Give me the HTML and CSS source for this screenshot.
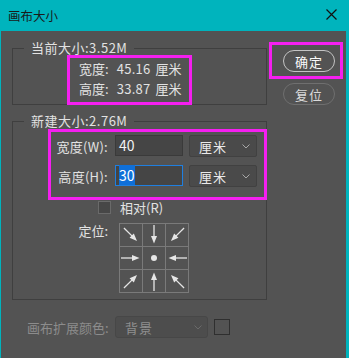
FILE: index.html
```html
<!DOCTYPE html>
<html lang="zh-CN">
<head>
  <meta charset="UTF-8">
  <title>画布大小</title>
  <link rel="stylesheet" href="styles.css">
</head>
<body>

  <div class="window">
    <div class="titlebar">
      <span class="title">画布大小</span>
      <svg class="close" width="11" height="11" viewBox="0 0 11 11">
        <path d="M0.5 0.5 L10.5 10.5 M10.5 0.5 L0.5 10.5" stroke="#111" stroke-width="1.2" fill="none"/>
      </svg>
    </div>

    <div class="main">
      <div class="left">
        <fieldset class="group group-current">
          <legend>当前大小:3.52M</legend>
          <div class="mark mark-current">
            <div class="size-line"><span class="lbl">宽度:</span><span class="val">45.16</span><span class="unit">厘米</span></div>
            <div class="size-line"><span class="lbl">高度:</span><span class="val">33.87</span><span class="unit">厘米</span></div>
          </div>
        </fieldset>

        <fieldset class="group group-new">
          <legend>新建大小:2.76M</legend>
          <div class="mark mark-new">
            <div class="field-row">
              <span class="field-lbl">宽度(W):</span>
              <div class="num-input">40</div>
              <div class="select">
                <span>厘米</span>
                <svg width="8" height="5" viewBox="0 0 8 5"><path d="M0.5 0.5 L4 4 L7.5 0.5" stroke="#a8a8a8" fill="none"/></svg>
              </div>
            </div>
            <div class="field-row">
              <span class="field-lbl">高度(H):</span>
              <div class="num-input focused"><span class="sel">30</span></div>
              <div class="select">
                <span>厘米</span>
                <svg width="8" height="5" viewBox="0 0 8 5"><path d="M0.5 0.5 L4 4 L7.5 0.5" stroke="#a8a8a8" fill="none"/></svg>
              </div>
            </div>
          </div>

          <div class="check-row">
            <span class="checkbox"></span>
            <span>相对(R)</span>
          </div>

          <div class="anchor-row">
            <span class="anchor-lbl">定位:</span>
            <div class="anchor-grid">
              <div class="cell"><svg viewBox="0 0 22 22"><use href="#arrow" transform="rotate(45 11 11)"/></svg></div>
              <div class="cell"><svg viewBox="0 0 22 22"><use href="#arrow" transform="rotate(90 11 11)"/></svg></div>
              <div class="cell"><svg viewBox="0 0 22 22"><use href="#arrow" transform="rotate(135 11 11)"/></svg></div>
              <div class="cell"><svg viewBox="0 0 22 22"><use href="#arrow"/></svg></div>
              <div class="cell"><svg viewBox="0 0 22 22"><circle cx="11" cy="11" r="3" fill="#e6e6e6"/></svg></div>
              <div class="cell"><svg viewBox="0 0 22 22"><use href="#arrow" transform="rotate(180 11 11)"/></svg></div>
              <div class="cell"><svg viewBox="0 0 22 22"><use href="#arrow" transform="rotate(-45 11 11)"/></svg></div>
              <div class="cell"><svg viewBox="0 0 22 22"><use href="#arrow" transform="rotate(-90 11 11)"/></svg></div>
              <div class="cell"><svg viewBox="0 0 22 22"><use href="#arrow" transform="rotate(-135 11 11)"/></svg></div>
            </div>
          </div>
        </fieldset>
      </div>

      <div class="right">
        <div class="mark mark-ok">
          <div class="btn btn-ok">确定</div>
        </div>
        <div class="btn btn-reset">复位</div>
      </div>
    </div>

    <div class="ext-row">
      <span class="ext-lbl">画布扩展颜色:</span>
      <div class="select select-dim">
        <span>背景</span>
        <svg width="8" height="5" viewBox="0 0 8 5"><path d="M0.5 0.5 L4 4 L7.5 0.5" stroke="#6a6a6a" fill="none"/></svg>
      </div>
      <span class="swatch"></span>
    </div>
  </div>

  <!-- 定位の矢印（右向きを回転して使う） -->
  <svg class="defs" width="0" height="0">
    <defs>
      <g id="arrow">
        <line x1="1" y1="11" x2="13" y2="11" stroke="#e6e6e6" stroke-width="1.3"/>
        <polygon points="12,8 19.5,11 12,14" fill="#e6e6e6"/>
      </g>
    </defs>
  </svg>

</body>
</html>
```

FILE: styles.css
```css
body {
  margin: 0;
  background-color: #00b4bd;
  font-family: "Noto Sans CJK SC", "Noto Sans", sans-serif;
  font-size: 13px;
  color: #e2e2e2;
}

.window {
  width: 345px;
  height: 358px;
  margin-left: 1px;
  background-color: #535353;
}

.titlebar {
  height: 31px;
  background-color: #00b4bd;
  display: flex;
  align-items: center;
  justify-content: space-between;
  padding: 0 8px 1px 7px;
  box-sizing: border-box;
}

.title {
  font-size: 12.5px;
  color: #1a1a1a;
}

.close {
  margin-right: 1px;
  margin-bottom: 1px;
}

.main {
  display: flex;
  padding: 10px 0 0 11px;
}

.left {
  width: 255px;
}

.right {
  margin-left: 2px;
  margin-top: 1px;
  display: flex;
  flex-direction: column;
}

.group {
  margin: 0;
  padding: 0;
  min-width: 0;
  border: 1px solid #3f3f3f;
}

.group legend {
  margin-left: 11px;
  padding: 0 7px;
  line-height: 14px;
  font-size: 13px;
  letter-spacing: 0.5px;
  color: #e2e2e2;
}

.mark {
  border: 3px solid #f51ff0;
  box-sizing: border-box;
}

.mark-current {
  width: 125px;
  margin-left: 54px;
  margin-bottom: -1px;
  padding: 1px 0 3px 9px;
}

.size-line {
  line-height: 20px;
  display: flex;
  white-space: nowrap;
}

.size-line .val {
  margin-left: 8px;
  letter-spacing: 0.3px;
}

.size-line .unit {
  margin-left: 5px;
}

.group-new {
  margin-top: 9px;
  padding-bottom: 6px;
}

.mark-new {
  width: 219px;
  margin: 1px -1px 0 35px;
  padding: 3px 0 10px 0;
  display: flex;
  flex-direction: column;
  gap: 8px;
}

.field-row {
  display: flex;
  align-items: center;
  height: 22px;
}

.field-lbl {
  width: 57px;
  text-align: right;
  white-space: nowrap;
  letter-spacing: 0.3px;
}

.num-input {
  width: 68px;
  height: 21px;
  margin-left: 7px;
  margin-bottom: 1px;
  box-sizing: border-box;
  background-color: #454545;
  border: 1px solid #3a3a3a;
  padding-left: 3px;
  font-size: 14px;
  line-height: 19px;
  color: #f2f2f2;
}

.num-input.focused {
  border-color: #1f7fe0;
}

.sel {
  background-color: #0f6fd8;
  color: #fff;
}

.select {
  width: 68px;
  height: 22px;
  margin-left: 6px;
  box-sizing: border-box;
  background-color: #4a4a4a;
  border: 1px solid #414141;
  border-radius: 2px;
  display: flex;
  align-items: center;
  justify-content: space-between;
  padding: 0 6px 0 9px;
  color: #eaeaea;
  letter-spacing: 1px;
}

.check-row {
  display: flex;
  align-items: center;
  gap: 9px;
  margin: 1px 0 0 85px;
  height: 13px;
}

.checkbox {
  width: 11px;
  height: 11px;
  border: 1px solid #6a6a6a;
  background-color: #474747;
}

.anchor-row {
  display: flex;
  margin-top: 9px;
}

.anchor-lbl {
  width: 95px;
  text-align: right;
  line-height: 16px;
}

.anchor-grid {
  margin-left: 11px;
  display: grid;
  grid-template-columns: repeat(3, 22px);
  grid-template-rows: repeat(3, 22px);
  gap: 1px;
  background-color: #7a7a7a;
  border: 1px solid #7a7a7a;
}

.cell {
  background-color: #535353;
}

.cell svg {
  display: block;
  width: 22px;
  height: 22px;
}

.mark-ok {
  width: 74px;
  height: 37px;
  padding: 5px 0 0 11px;
}

.btn {
  width: 52px;
  height: 22px;
  box-sizing: border-box;
  border-radius: 11px;
  display: flex;
  align-items: center;
  justify-content: center;
  font-size: 13px;
  letter-spacing: 1px;
}

.btn-ok {
  border: 1.5px solid #c4c4c4;
  color: #fafafa;
}

.btn-reset {
  margin: 4px 0 0 14px;
  border: 1.5px solid #6f6f6f;
  color: #dadada;
}

.ext-row {
  display: flex;
  align-items: center;
  margin-top: 16px;
  padding-left: 26px;
}

.ext-lbl {
  color: #8c8c8c;
  width: 82px;
  white-space: nowrap;
}

.select-dim {
  width: 93px;
  margin-left: 6px;
  background-color: #4d4d4d;
  border-color: #474747;
  border-radius: 3px;
  color: #8f8f8f;
  padding-right: 5px;
}

.swatch {
  width: 16px;
  height: 16px;
  margin-left: 6px;
  box-sizing: border-box;
  border: 1.5px solid #2f2f2f;
}

.defs {
  position: absolute;
}
```
